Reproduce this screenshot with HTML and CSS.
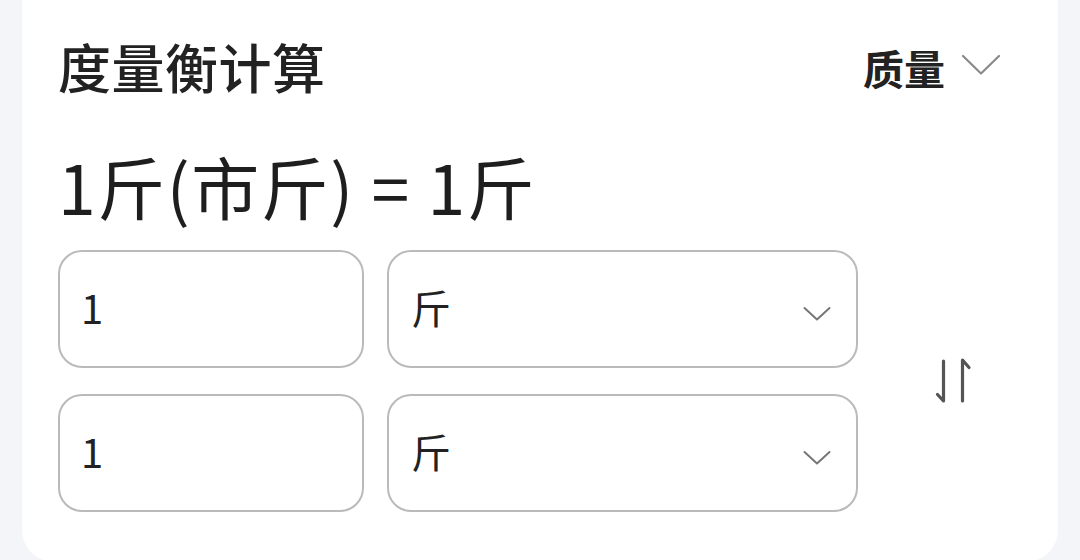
FILE: index.html
```html
<!DOCTYPE html>
<html lang="zh-CN">
<head>
<meta charset="utf-8">
<title>度量衡计算</title>
<link rel="stylesheet" href="styles.css">
</head>
<body>
<section class="card">
  <header class="head">
    <h1 class="title">度量衡计算</h1>
    <div class="category">
      <span class="category-name">质量</span>
      <svg class="category-arrow" width="38" height="22" viewBox="0 0 38 22">
        <path d="M1 2 L19 19.5 L37 2" fill="none" stroke="#8a8a8a" stroke-width="2.2" stroke-linecap="round" stroke-linejoin="round"/>
      </svg>
    </div>
  </header>

  <p class="result">1斤(市斤) = 1斤</p>

  <div class="form">
    <input class="field amount" type="text" value="1">
    <div class="field select">
      <span>斤</span>
      <svg class="select-arrow" width="28" height="16" viewBox="0 0 28 16">
        <path d="M1.5 2 L14 13.5 L26.5 2" fill="none" stroke="#777" stroke-width="2" stroke-linecap="round" stroke-linejoin="round"/>
      </svg>
    </div>

    <button class="swap" type="button" aria-label="交换">
      <svg width="40" height="48" viewBox="0 0 40 48">
        <path d="M9.5 4 V44 L3.5 37.5" fill="none" stroke="#555" stroke-width="3.2" stroke-linecap="round" stroke-linejoin="round"/>
        <path d="M28.5 44 V3 L35 10.5" fill="none" stroke="#555" stroke-width="3.2" stroke-linecap="round" stroke-linejoin="round"/>
      </svg>
    </button>

    <input class="field amount" type="text" value="1">
    <div class="field select">
      <span>斤</span>
      <svg class="select-arrow" width="28" height="16" viewBox="0 0 28 16">
        <path d="M1.5 2 L14 13.5 L26.5 2" fill="none" stroke="#777" stroke-width="2" stroke-linecap="round" stroke-linejoin="round"/>
      </svg>
    </div>
  </div>
</section>
</body>
</html>
```

FILE: styles.css
```css
html, body {
  margin: 0;
  padding: 0;
}

body {
  width: 1080px;
  height: 560px;
  overflow: hidden;
  background: #f4f5f9;
  font-family: "Noto Sans CJK SC", "Noto Sans", sans-serif;
  color: #222;
}

.card {
  box-sizing: border-box;
  width: 1036px;
  height: 592px;
  margin: -30px 0 0 22px;
  padding: 61px 36px 0 36px;
  background: #fff;
  border-radius: 32px;
}

.head {
  display: flex;
  align-items: center;
  justify-content: space-between;
  height: 70px;
  padding-right: 22px;
}

.title {
  margin: 0;
  font-size: 53px;
  font-weight: 500;
  line-height: 70px;
  letter-spacing: 0.5px;
  color: #222;
}

.category {
  display: flex;
  align-items: center;
  gap: 17px;
  margin-top: 2px;
}

.category-name {
  font-size: 41px;
  font-weight: 700;
  line-height: 60px;
  color: #222;
}

.category-arrow {
  display: block;
  margin-top: -4px;
}

.result {
  margin: 45px 0 0 0;
  height: 80px;
  font-size: 68px;
  font-weight: 400;
  line-height: 80px;
  letter-spacing: 1.5px;
  color: #1e1e1e;
}

.form {
  display: grid;
  grid-template-columns: 306px 471px 1fr;
  grid-template-rows: 118px 118px;
  column-gap: 23px;
  row-gap: 26px;
  margin-top: 24px;
}

.field {
  box-sizing: border-box;
  height: 118px;
  margin: 0;
  border: 2.5px solid #bababa;
  border-radius: 24px;
  background: #fff;
  font-family: inherit;
  font-size: 40px;
  color: #222;
}

.amount {
  width: 306px;
  padding: 0 0 4px 21px;
  outline: none;
}

.select {
  display: flex;
  align-items: center;
  justify-content: space-between;
  padding: 0 25px 0 22px;
}

.select span {
  line-height: 1;
  margin-top: -4px;
}

.select-arrow {
  display: block;
  margin-top: 10px;
}

.swap {
  grid-column: 3;
  grid-row: 1 / span 2;
  align-self: center;
  justify-self: center;
  display: flex;
  padding: 0;
  margin: 0 0 0 4px;
  border: none;
  background: none;
}

.swap svg {
  display: block;
}
```
